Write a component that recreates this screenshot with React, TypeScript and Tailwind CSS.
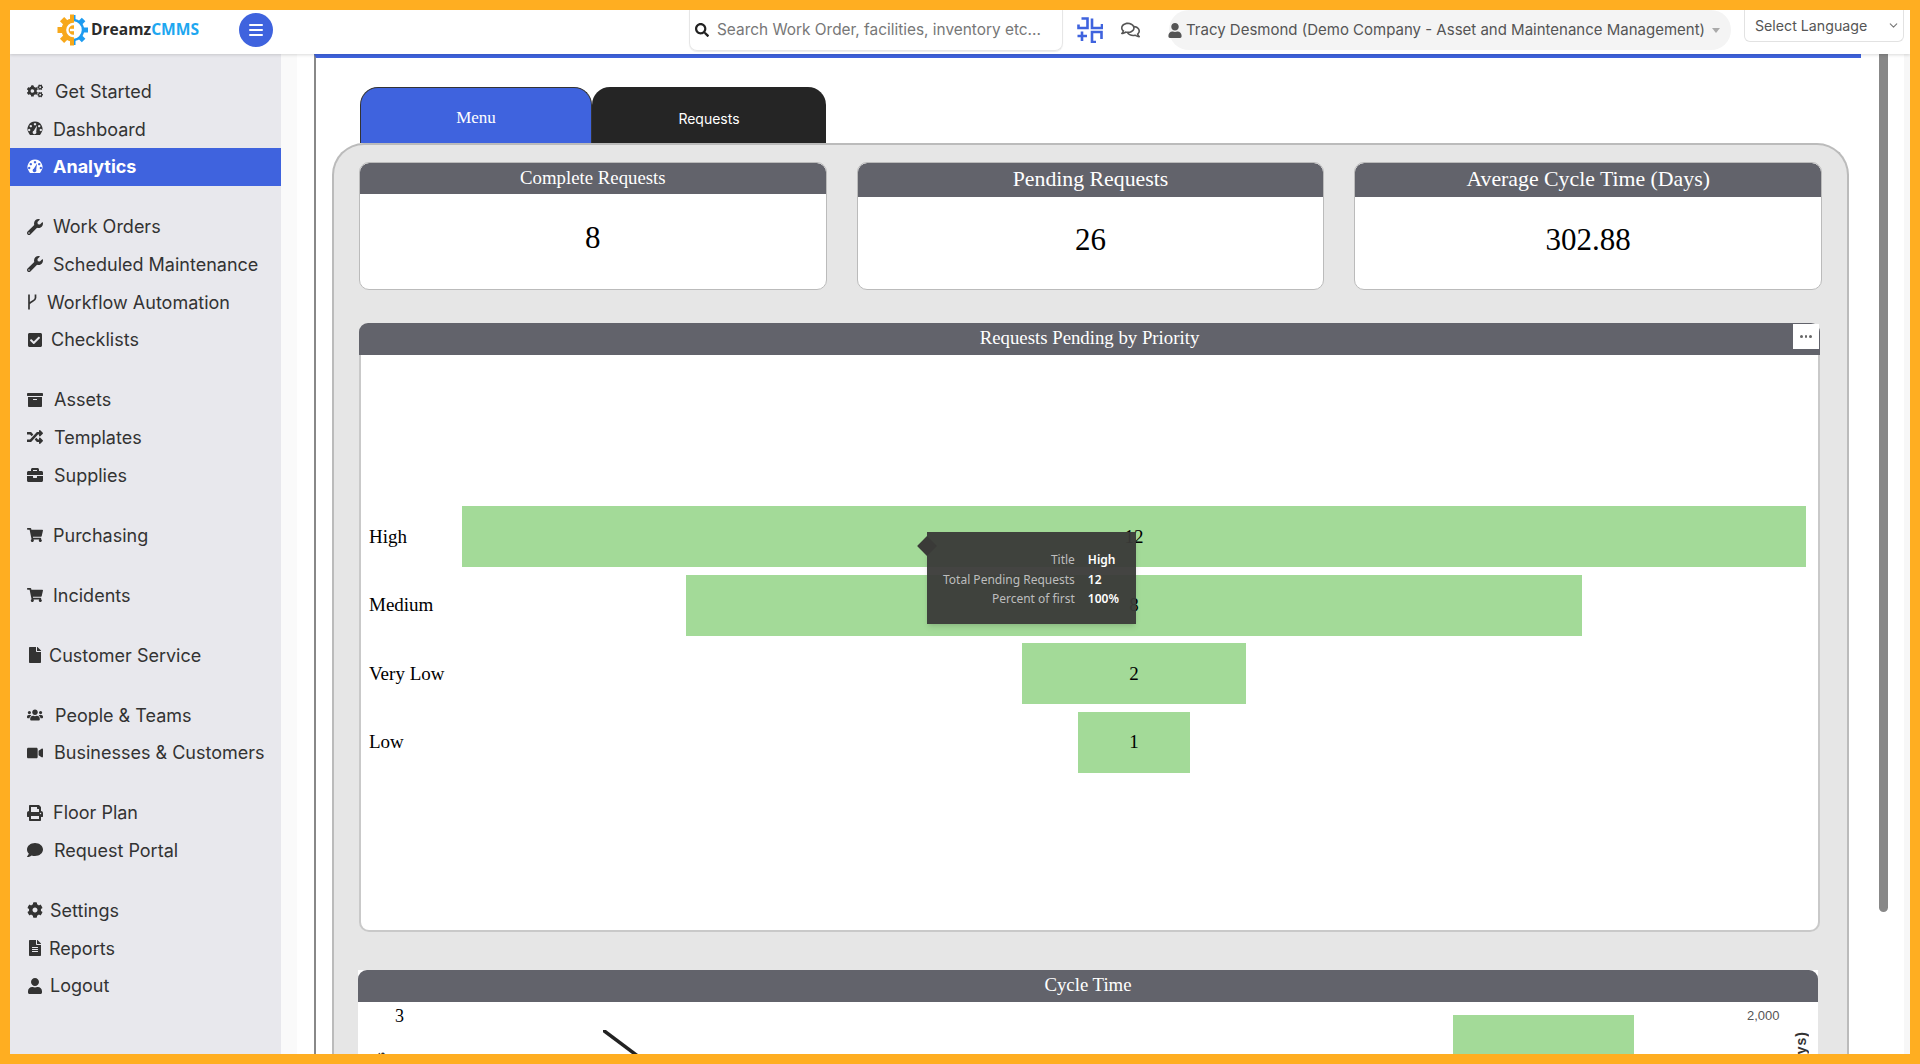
import type { ComponentType } from 'react'
import {
  FaArchive,
  FaBriefcase,
  FaCheckSquare,
  FaCog,
  FaCogs,
  FaComment,
  FaFile,
  FaFileAlt,
  FaPrint,
  FaRandom,
  FaRegComments,
  FaSearch,
  FaShoppingCart,
  FaUser,
  FaUsers,
  FaVideo,
  FaWrench,
} from 'react-icons/fa'
import { ChevronDown } from 'lucide-react'

type IconProps = { className?: string }
type NavItem = { label: string; icon: ComponentType<IconProps>; gap: string; active?: boolean }

function GaugeIcon({ className }: IconProps) {
  return (
    <svg className={className} viewBox="0 0 16 16" fill="currentColor" fillRule="evenodd">
      <path d="M8 0.5a7.5 7.5 0 0 1 6 12l-1 1.5H3l-1-1.5a7.5 7.5 0 0 1 6-12zM8 2a1.2 1.2 0 1 0 0.01 0zM3.8 3.9a1.2 1.2 0 1 0 0.01 0zM12.2 3.9a1.2 1.2 0 1 0 0.01 0zM2.2 7.8a1.2 1.2 0 1 0 0.01 0zM13.8 7.8a1.2 1.2 0 1 0 0.01 0zM10 4.6l-3.2 5.2a1.8 1.8 0 1 0 2.4 1z" />
    </svg>
  )
}

function ForkIcon({ className }: IconProps) {
  return (
    <svg className={className} viewBox="0 0 10 16" fill="none" stroke="currentColor" strokeWidth="1.7">
      <path d="M2 0.5V15.5M8.5 0.5V4C8.5 7 4 7 2 10" />
    </svg>
  )
}

const navGroups: NavItem[][] = [
  [
    { label: 'Get Started', icon: FaCogs, gap: 'w-[28px]' },
    { label: 'Dashboard', icon: GaugeIcon, gap: 'w-[26px]' },
    { label: 'Analytics', icon: GaugeIcon, gap: 'w-[26px]', active: true },
  ],
  [
    { label: 'Work Orders', icon: FaWrench, gap: 'w-[26px]' },
    { label: 'Scheduled Maintenance', icon: FaWrench, gap: 'w-[26px]' },
    { label: 'Workflow Automation', icon: ForkIcon, gap: 'w-[20px]' },
    { label: 'Checklists', icon: FaCheckSquare, gap: 'w-[24px]' },
  ],
  [
    { label: 'Assets', icon: FaArchive, gap: 'w-[27px]' },
    { label: 'Templates', icon: FaRandom, gap: 'w-[27px]' },
    { label: 'Supplies', icon: FaBriefcase, gap: 'w-[27px]' },
  ],
  [{ label: 'Purchasing', icon: FaShoppingCart, gap: 'w-[26px]' }],
  [{ label: 'Incidents', icon: FaShoppingCart, gap: 'w-[26px]' }],
  [{ label: 'Customer Service', icon: FaFile, gap: 'w-[22px]' }],
  [
    { label: 'People & Teams', icon: FaUsers, gap: 'w-[28px]' },
    { label: 'Businesses & Customers', icon: FaVideo, gap: 'w-[27px]' },
  ],
  [
    { label: 'Floor Plan', icon: FaPrint, gap: 'w-[26px]' },
    { label: 'Request Portal', icon: FaComment, gap: 'w-[27px]' },
  ],
  [
    { label: 'Settings', icon: FaCog, gap: 'w-[23px]' },
    { label: 'Reports', icon: FaFileAlt, gap: 'w-[22px]' },
    { label: 'Logout', icon: FaUser, gap: 'w-[23px]' },
  ],
]

const stats = [
  { title: 'Complete Requests', value: '8', head: 'h-[31px] text-[18.8px]' },
  { title: 'Pending Requests', value: '26', head: 'h-[34px] text-[21.8px]' },
  { title: 'Average Cycle Time (Days)', value: '302.88', head: 'h-[34px] text-[21.8px]' },
]

const funnel = [
  { label: 'High', value: 12, width: 'w-full' },
  { label: 'Medium', value: 8, width: 'w-2/3' },
  { label: 'Very Low', value: 2, width: 'w-1/6' },
  { label: 'Low', value: 1, width: 'w-1/12' },
]

function Logo() {
  const teeth = [0, 45, 90, 135, 180, 225, 270, 315]
  return (
    <svg width="32" height="32" viewBox="0 0 32 32">
      <defs>
        <clipPath id="left-half">
          <rect x="0" y="0" width="17" height="32" />
        </clipPath>
        <clipPath id="right-half">
          <rect x="17" y="0" width="15" height="32" />
        </clipPath>
      </defs>
      <g clipPath="url(#left-half)" fill="#f7a81b">
        <circle cx="16" cy="16" r="11.5" />
        {teeth.map(t => (
          <rect key={t} x="13" y="0.5" width="6" height="6" transform={`rotate(${t} 16 16)`} />
        ))}
      </g>
      <g clipPath="url(#right-half)">
        <g fill="#1d9bf0">
          {teeth.map(t => (
            <rect key={t} x="13.5" y="1" width="5" height="5" transform={`rotate(${t} 16 16)`} />
          ))}
        </g>
        <circle cx="16" cy="16" r="10" fill="none" stroke="#1d9bf0" strokeWidth="2.5" />
      </g>
      <path d="M21 12.2a6 6 0 1 0 0 7.6" fill="none" stroke="#fff" strokeWidth="2.4" />
      <rect x="13" y="14.8" width="10" height="2.4" fill="#fff" />
    </svg>
  )
}

function ScanIcon() {
  return (
    <svg width="26" height="26" viewBox="0 0 26 26" fill="none" stroke="#3f63de" strokeWidth="2.6">
      <path d="M1.5 7.5V11H10.5V1.5H4.5" />
      <path d="M15 1.5V11H25V7" />
      <path d="M0.5 19H10M5 14.5V24" />
      <path d="M24.5 22V15H15V25H19" />
    </svg>
  )
}

function Header() {
  return (
    <header className="relative z-10 flex h-[44px] shrink-0 items-start bg-white shadow-[0_1px_3px_rgba(0,0,0,0.15)]">
      <div className="flex h-[40px] w-[229px] shrink-0 items-center pl-[47px]">
        <Logo />
        <span className="ml-[2px] text-[15.6px] font-bold leading-none text-[#2b2b2b] [font-family:'Open_Sans',sans-serif]">
          Dreamz<span className="text-[#1ea7f0]">CMMS</span>
        </span>
      </div>
      <button className="mt-[3px] flex h-[34px] w-[34px] items-center justify-center rounded-full bg-[#3f63de]">
        <span className="flex w-[14px] flex-col gap-[2.5px]">
          <span className="h-[2.5px] rounded-full bg-white" />
          <span className="h-[2.5px] rounded-full bg-white" />
          <span className="h-[2.5px] rounded-full bg-white" />
        </span>
      </button>
      <div className="ml-[416px] flex h-[41px] w-[374px] shrink-0 items-center rounded-b-lg border border-t-0 border-[#e6e6e6] pl-[5px] shadow-[0_1px_1px_rgba(0,0,0,0.08)]">
        <FaSearch className="h-[14px] w-[14px] text-[#222]" />
        <span className="ml-[8px] whitespace-nowrap text-[15.4px] text-[#777]">Search Work Order, facilities, inventory etc...</span>
      </div>
      <div className="ml-[14px] mt-[7px]">
        <ScanIcon />
      </div>
      <FaRegComments className="ml-[18px] mt-[11px] h-[18px] w-[19px] text-[#555]" />
      <div className="ml-[29px] flex h-[40px] w-[562px] shrink-0 items-center rounded-[20px] bg-[#f4f4f4]">
        <FaUser className="-ml-[1px] h-[15px] w-[14px] text-[#555]" />
        <span className="ml-[4px] whitespace-nowrap text-[15px] text-[#555]">
          Tracy Desmond (Demo Company - Asset and Maintenance Management)
        </span>
        <span className="ml-[7px] h-0 w-0 border-x-[4px] border-t-[5px] border-x-transparent border-t-[#aaa]" />
      </div>
      <div className="ml-[13px] flex h-[32px] w-[160px] shrink-0 items-center justify-between rounded-b-md border-b border-x border-[#e2e2e2] pl-[10px] pr-[3px]">
        <span className="text-[14.2px] text-[#555]">Select Language</span>
        <ChevronDown className="h-[13px] w-[13px] text-[#777]" />
      </div>
    </header>
  )
}

function Sidebar() {
  return (
    <aside className="flex w-[271px] shrink-0 flex-col gap-[22.3px] bg-[#e8e8ed] pt-[18.5px]">
      {navGroups.map((group, i) => (
        <div key={i}>
          {group.map(item => {
            const Icon = item.icon
            return (
              <div
                key={item.label}
                className={`flex h-[37.7px] items-center pl-[17px] text-[18px] ${
                  item.active ? 'bg-[#3f63de] font-bold text-white' : 'text-[#333]'
                }`}
              >
                <span className={`flex shrink-0 items-center ${item.gap}`}>
                  <Icon className="h-[16px] w-auto" />
                </span>
                {item.label}
              </div>
            )
          })}
        </div>
      ))}
    </aside>
  )
}

function CardHeader({ title, className }: { title: string; className: string }) {
  return (
    <div className={`flex items-center justify-center rounded-t-[9px] bg-[#62636b] pb-[1px] text-white ${className}`}>
      {title}
    </div>
  )
}

function Tooltip() {
  return (
    <div className="absolute left-[566px] top-[177px] z-10 h-[92px] w-[209px] bg-[#3a3a38]/95 pl-[16px] pt-[18px] text-[12px] leading-[19.5px] shadow-md [font-family:'Noto_Sans',sans-serif]">
      <span className="absolute -left-[7px] top-[7px] h-[14px] w-[14px] rotate-45 bg-[#3a3a38]" />
      <div className="grid grid-cols-[max-content_max-content] gap-x-[13px]">
        <span className="text-right text-[#bdbdbd]">Title</span>
        <span className="font-semibold text-white">High</span>
        <span className="text-right text-[#bdbdbd]">Total Pending Requests</span>
        <span className="font-semibold text-white">12</span>
        <span className="text-right text-[#bdbdbd]">Percent of first</span>
        <span className="font-semibold text-white">100%</span>
      </div>
    </div>
  )
}

function FunnelChart() {
  return (
    <section className="mt-[33px] mr-[2px] h-[609px] rounded-[10px] border-x-2 border-b-2 border-[#c9c9c9] bg-white">
      <div className="relative -mx-[2px]">
        <CardHeader title="Requests Pending by Priority" className="h-[32px] text-[18.8px]" />
        <button className="absolute right-[1px] top-[1px] flex h-[25px] w-[26px] items-center justify-center gap-[2px] bg-white">
          <span className="h-[2.5px] w-[2.5px] rounded-full bg-[#666]" />
          <span className="h-[2.5px] w-[2.5px] rounded-full bg-[#666]" />
          <span className="h-[2.5px] w-[2.5px] rounded-full bg-[#666]" />
        </button>
      </div>
      <div className="relative flex flex-col gap-[7.5px] pt-[151px] pr-[12px]">
        {funnel.map(row => (
          <div key={row.label} className="flex h-[61px] items-center">
            <span className="w-[101px] shrink-0 pl-[8px] pt-[1px] text-[19px] text-black">{row.label}</span>
            <div className="flex flex-1 justify-center">
              <div className={`flex h-[61px] items-center justify-center bg-[#a3da98] pt-[1px] text-[19px] text-black ${row.width}`}>
                {row.value}
              </div>
            </div>
          </div>
        ))}
        <Tooltip />
      </div>
    </section>
  )
}

function CycleTimeChart() {
  return (
    <section className="relative mt-[38px] ml-[-1px] mr-[4px] h-[300px] bg-white">
      <CardHeader title="Cycle Time" className="h-[32px] text-[18.8px]" />
      <div className="flex items-start pt-[2px] pl-[37px]">
        <span className="w-[9px] shrink-0 text-[18px] leading-[24px] text-black">3</span>
        <svg className="ml-[199px] mt-[26px] h-[60px] w-[60px] shrink-0" viewBox="0 0 60 60">
          <line x1="0" y1="0" x2="60" y2="45" stroke="#222" strokeWidth="3.5" />
        </svg>
        <div className="ml-[790px] mt-[11px] h-[60px] w-[181px] shrink-0 bg-[#a3da98]" />
        <span className="ml-[113px] shrink-0 text-[13px] leading-[24px] text-[#555] [font-family:'Liberation_Sans',sans-serif]">2,000</span>
      </div>
      <span className="absolute left-[13px] top-[82px] rotate-180 text-[13px] font-semibold text-[#333] [writing-mode:vertical-rl] [font-family:'Liberation_Sans',sans-serif]">
        Requests
      </span>
      <span className="absolute right-[6px] top-[61px] rotate-180 text-[14px] font-semibold tracking-[1px] text-[#333] [writing-mode:vertical-rl] [font-family:'Liberation_Sans',sans-serif]">
        (Days)
      </span>
    </section>
  )
}

export default function App() {
  return (
    <div className="flex h-[1064px] flex-col overflow-hidden border-[10px] border-[#ffae21] bg-white [font-family:Inter,sans-serif]">
      <Header />
      <div className="flex min-h-0 flex-1">
        <Sidebar />
        <div className="w-[16px] shrink-0 bg-[#fafafa]" />
        <main className="ml-[17px] h-[1100px] w-[1547px] shrink-0 border-l-2 border-t-4 border-l-[#888] border-t-[#3f63de] pl-[16px] [font-family:'Liberation_Serif',serif]">
          <div className="mt-[29px] ml-[28px] flex h-[56px] items-stretch">
            <div className="flex w-[232px] items-center justify-center rounded-t-[18px] border border-b-0 border-[#333] bg-[#3f63de] pt-[4px] text-[17px] text-white">
              Menu
            </div>
            <div className="flex w-[234px] items-center justify-center rounded-t-[18px] bg-[#252525] pt-[6px] text-[14px] text-white [font-family:Inter,sans-serif]">
              Requests
            </div>
          </div>
          <div className="w-[1517px] rounded-t-[32px] border-x-2 border-t-2 border-[#bbb] bg-[#e6e6e6] px-[25px] pt-[17px]">
            <div className="grid grid-cols-3 gap-[30px]">
              {stats.map(s => (
                <div key={s.title} className="flex h-[128px] flex-col overflow-hidden rounded-[10px] border border-[#bbb] bg-white">
                  <CardHeader title={s.title} className={s.head} />
                  <div className="flex flex-1 items-center justify-center pb-[6px] text-[31px] text-black">{s.value}</div>
                </div>
              ))}
            </div>
            <FunnelChart />
            <CycleTimeChart />
          </div>
        </main>
        <div className="ml-[18px] h-[858px] w-[9px] shrink-0 rounded-b-[5px] bg-[#888]" />
        <div className="ml-auto w-[6px] shrink-0 bg-[#f7f7f7]" />
      </div>
    </div>
  )
}
